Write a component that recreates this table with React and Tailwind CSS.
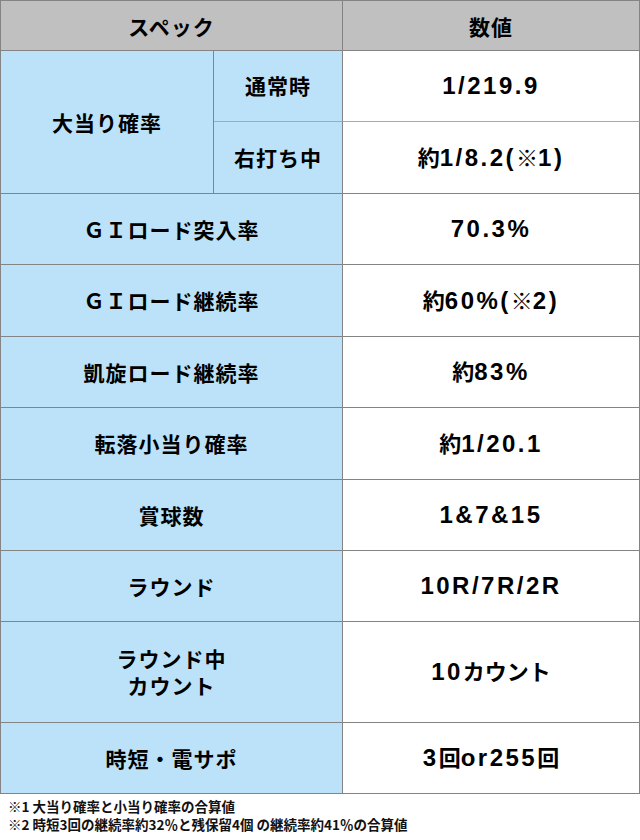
import React from "react";

const CJK = /([\u203B\u3000-\u9fff\uff00-\uffef]+)/;

function Value({ text }) {
  const parts = text.split(CJK).filter((p) => p.length > 0);
  return (
    <span className="whitespace-nowrap">
      {parts.map((p, i) =>
        CJK.test(p) ? (
          <span
            key={i}
            className="text-[22px] font-bold tracking-[0px] [font-family:'Noto_Sans_CJK_JP',sans-serif]"
          >
            {p}
          </span>
        ) : (
          <span
            key={i}
            className="text-[24px] font-bold tracking-[2.5px] [font-family:'Liberation_Sans',Arial,sans-serif]"
          >
            {p}
          </span>
        )
      )}
    </span>
  );
}

const labelCls =
  "flex items-center justify-center bg-[#bbe2f8] border-r border-b border-[#848484] text-[21px] font-bold tracking-[1px] leading-[27px] text-black text-center [font-family:'Noto_Sans_CJK_JP',sans-serif]";
const valueCls =
  "flex items-center justify-center bg-white border-r border-b border-[#848484] text-black";

const rows = [
  { label: "ＧＩロード突入率", value: "70.3%" },
  { label: "ＧＩロード継続率", value: "約60%(※2)" },
  { label: "凱旋ロード継続率", value: "約83%" },
  { label: "転落小当り確率", value: "約1/20.1" },
  { label: "賞球数", value: "1&7&15" },
  { label: "ラウンド", value: "10R/7R/2R" },
  { label: "ラウンド中\nカウント", value: "10カウント" },
  { label: "時短・電サポ", value: "3回or255回" },
];

export default function App() {
  return (
    <div className="w-[640px] h-[840px] bg-white">
      <div className="grid grid-cols-[213px_129px_297px] grid-rows-[50px_71px_72px_71px_72px_71px_72px_71px_71px_101px_71px] border-t border-l border-[#848484] w-[640px]">
        <div className="col-span-2 flex items-center justify-center bg-[#c0c0c0] border-r border-b border-[#848484] text-[21px] font-bold tracking-[1px] text-black pt-[2px] [font-family:'Noto_Sans_CJK_JP',sans-serif]">
          スペック
        </div>
        <div className="flex items-center justify-center bg-[#c0c0c0] border-r border-b border-[#848484] text-[21px] font-bold tracking-[1px] text-black pt-[2px] [font-family:'Noto_Sans_CJK_JP',sans-serif]">
          数値
        </div>

        <div className={"row-span-2 " + labelCls}>大当り確率</div>
        <div className="flex items-center justify-center bg-[#bbe2f8] border-r border-b border-r-[#848484] border-b-[#a8a8a8] text-[21px] font-bold tracking-[1px] text-black [font-family:'Noto_Sans_CJK_JP',sans-serif]">
          通常時
        </div>
        <div className="flex items-center justify-center bg-white border-r border-b border-r-[#848484] border-b-[#a8a8a8] text-black">
          <Value text="1/219.9" />
        </div>
        <div className={labelCls}>右打ち中</div>
        <div className={valueCls}>
          <Value text="約1/8.2(※1)" />
        </div>

        {rows.map((r, i) => (
          <React.Fragment key={i}>
            <div className={"col-span-2 " + labelCls}>
              <span className="whitespace-pre">{r.label}</span>
            </div>
            <div className={valueCls}>
              <Value text={r.value} />
            </div>
          </React.Fragment>
        ))}
      </div>
      <div className="pt-[3px] pl-[8px] text-[13.5px] leading-[18px] font-bold text-[#111] [font-family:'Noto_Sans_CJK_JP',sans-serif]">
        <div>※1 大当り確率と小当り確率の合算値</div>
        <div>※2 時短3回の継続率約32％と残保留4個 の継続率約41％の合算値</div>
      </div>
    </div>
  );
}
